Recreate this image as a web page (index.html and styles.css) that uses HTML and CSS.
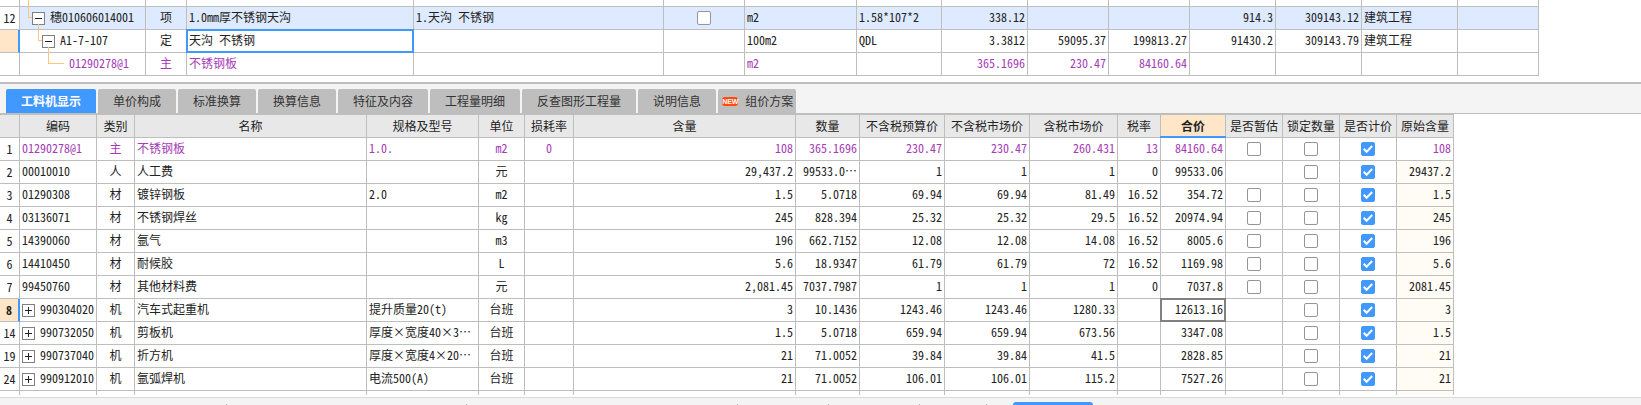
FILE: index.html
```html
<!DOCTYPE html>
<html lang="zh-CN">
<head>
    <meta charset="UTF-8">
    <meta name="viewport" content="width=device-width, initial-scale=1.0">
    <title>工料机显示</title>
    <link rel="stylesheet" href="styles.css">
</head>
<body>

    <!-- Bill of quantities -->
    <section class="bill">
        <table class="grid bill-grid">
            <colgroup>
                <col class="w20"><col class="w126"><col class="w41"><col class="w227"><col class="w250"><col class="w81"><col class="w112"><col class="w85"><col class="w86"><col class="w81"><col class="w81"><col class="w86"><col class="w86"><col class="w96"><col class="w81"><col>
            </colgroup>
            <tbody>
                <tr class="partial-top">
                    <td></td><td></td><td></td><td></td><td></td><td></td><td></td><td></td><td></td><td></td><td></td><td></td><td></td><td></td><td></td><td class="filler"></td>
                </tr>
                <tr class="current">
                    <td class="row-no">12</td>
                    <td><div class="tree level-1"><span class="branch first"></span><button class="toggle minus" type="button" aria-label="折叠"></button><span class="code">穗010606014001</span></div></td>
                    <td class="center">项</td>
                    <td>1.0mm厚不锈钢天沟</td>
                    <td>1.天沟 不锈钢</td>
                    <td class="center"><input type="checkbox" aria-label="主要清单"></td>
                    <td>m2</td>
                    <td>1.58*107*2</td>
                    <td class="num">338.12</td>
                    <td></td>
                    <td></td>
                    <td class="num">914.3</td>
                    <td class="num">309143.12</td>
                    <td>建筑工程</td>
                    <td></td>
                    <td class="filler"></td>
                </tr>
                <tr>
                    <td class="row-no active"></td>
                    <td><div class="tree level-2"><span class="branch"></span><button class="toggle minus" type="button" aria-label="折叠"></button><span class="code">A1-7-107</span></div></td>
                    <td class="center">定</td>
                    <td class="editing">天沟 不锈钢</td>
                    <td></td>
                    <td></td>
                    <td>100m2</td>
                    <td>QDL</td>
                    <td class="num">3.3812</td>
                    <td class="num">59095.37</td>
                    <td class="num">199813.27</td>
                    <td class="num">91430.2</td>
                    <td class="num">309143.79</td>
                    <td>建筑工程</td>
                    <td></td>
                    <td class="filler"></td>
                </tr>
                <tr class="main-material">
                    <td class="row-no"></td>
                    <td><div class="tree level-3"><span class="branch leaf"></span><span class="code">01290278@1</span></div></td>
                    <td class="center">主</td>
                    <td>不锈钢板</td>
                    <td></td>
                    <td></td>
                    <td>m2</td>
                    <td></td>
                    <td class="num">365.1696</td>
                    <td class="num">230.47</td>
                    <td class="num">84160.64</td>
                    <td></td>
                    <td></td>
                    <td></td>
                    <td></td>
                    <td class="filler"></td>
                </tr>
            </tbody>
        </table>
    </section>

    <!-- Detail tabs -->
    <nav class="tabs">
        <button class="tab selected" type="button">工料机显示</button>
        <button class="tab" type="button">单价构成</button>
        <button class="tab" type="button">标准换算</button>
        <button class="tab" type="button">换算信息</button>
        <button class="tab" type="button">特征及内容</button>
        <button class="tab" type="button">工程量明细</button>
        <button class="tab" type="button">反查图形工程量</button>
        <button class="tab" type="button">说明信息</button>
        <button class="tab has-badge" type="button"><span class="badge">NEW</span>组价方案</button>
    </nav>

    <!-- Labour, material and machine details -->
    <section class="detail">
        <table class="grid detail-grid">
            <colgroup>
                <col class="w20"><col class="w77"><col class="w38"><col class="w232"><col class="w112"><col class="w46"><col class="w49"><col class="w222"><col class="w64"><col class="w85"><col class="w85"><col class="w88"><col class="w43"><col class="w65"><col class="w57"><col class="w57"><col class="w57"><col class="w57"><col>
            </colgroup>
            <thead>
                <tr>
                    <th></th><th>编码</th><th>类别</th><th>名称</th><th>规格及型号</th><th>单位</th><th>损耗率</th><th>含量</th><th>数量</th><th>不含税预算价</th><th>不含税市场价</th><th>含税市场价</th><th>税率</th><th class="sorted">合价</th><th>是否暂估</th><th>锁定数量</th><th>是否计价</th><th>原始含量</th><th class="filler"></th>
                </tr>
            </thead>
            <tbody>
                <tr class="main-material">
                    <td class="row-no">1</td><td>01290278@1</td><td class="center">主</td><td>不锈钢板</td><td>1.0.</td><td class="center">m2</td><td class="center">0</td>
                    <td class="num">108</td><td class="num">365.1696</td><td class="num">230.47</td><td class="num">230.47</td><td class="num">260.431</td><td class="num">13</td><td class="num">84160.64</td>
                    <td class="center"><input type="checkbox" aria-label="是否暂估"></td><td class="center"><input type="checkbox" aria-label="锁定数量"></td><td class="center"><input type="checkbox" aria-label="是否计价" checked></td>
                    <td class="num">108</td><td class="filler"></td>
                </tr>
                <tr>
                    <td class="row-no">2</td><td>00010010</td><td class="center">人</td><td>人工费</td><td></td><td class="center">元</td><td></td>
                    <td class="num">29,437.2</td><td class="num">99533.0…</td><td class="num">1</td><td class="num">1</td><td class="num">1</td><td class="num">0</td><td class="num">99533.06</td>
                    <td></td><td class="center"><input type="checkbox" aria-label="锁定数量"></td><td class="center"><input type="checkbox" aria-label="是否计价" checked></td>
                    <td class="num original">29437.2</td><td class="filler"></td>
                </tr>
                <tr>
                    <td class="row-no">3</td><td>01290308</td><td class="center">材</td><td>镀锌钢板</td><td>2.0</td><td class="center">m2</td><td></td>
                    <td class="num">1.5</td><td class="num">5.0718</td><td class="num">69.94</td><td class="num">69.94</td><td class="num">81.49</td><td class="num">16.52</td><td class="num">354.72</td>
                    <td class="center"><input type="checkbox" aria-label="是否暂估"></td><td class="center"><input type="checkbox" aria-label="锁定数量"></td><td class="center"><input type="checkbox" aria-label="是否计价" checked></td>
                    <td class="num original">1.5</td><td class="filler"></td>
                </tr>
                <tr>
                    <td class="row-no">4</td><td>03136071</td><td class="center">材</td><td>不锈钢焊丝</td><td></td><td class="center">kg</td><td></td>
                    <td class="num">245</td><td class="num">828.394</td><td class="num">25.32</td><td class="num">25.32</td><td class="num">29.5</td><td class="num">16.52</td><td class="num">20974.94</td>
                    <td class="center"><input type="checkbox" aria-label="是否暂估"></td><td class="center"><input type="checkbox" aria-label="锁定数量"></td><td class="center"><input type="checkbox" aria-label="是否计价" checked></td>
                    <td class="num original">245</td><td class="filler"></td>
                </tr>
                <tr>
                    <td class="row-no">5</td><td>14390060</td><td class="center">材</td><td>氩气</td><td></td><td class="center">m3</td><td></td>
                    <td class="num">196</td><td class="num">662.7152</td><td class="num">12.08</td><td class="num">12.08</td><td class="num">14.08</td><td class="num">16.52</td><td class="num">8005.6</td>
                    <td class="center"><input type="checkbox" aria-label="是否暂估"></td><td class="center"><input type="checkbox" aria-label="锁定数量"></td><td class="center"><input type="checkbox" aria-label="是否计价" checked></td>
                    <td class="num original">196</td><td class="filler"></td>
                </tr>
                <tr>
                    <td class="row-no">6</td><td>14410450</td><td class="center">材</td><td>耐候胶</td><td></td><td class="center">L</td><td></td>
                    <td class="num">5.6</td><td class="num">18.9347</td><td class="num">61.79</td><td class="num">61.79</td><td class="num">72</td><td class="num">16.52</td><td class="num">1169.98</td>
                    <td class="center"><input type="checkbox" aria-label="是否暂估"></td><td class="center"><input type="checkbox" aria-label="锁定数量"></td><td class="center"><input type="checkbox" aria-label="是否计价" checked></td>
                    <td class="num original">5.6</td><td class="filler"></td>
                </tr>
                <tr>
                    <td class="row-no">7</td><td>99450760</td><td class="center">材</td><td>其他材料费</td><td></td><td class="center">元</td><td></td>
                    <td class="num">2,081.45</td><td class="num">7037.7987</td><td class="num">1</td><td class="num">1</td><td class="num">1</td><td class="num">0</td><td class="num">7037.8</td>
                    <td class="center"><input type="checkbox" aria-label="是否暂估"></td><td class="center"><input type="checkbox" aria-label="锁定数量"></td><td class="center"><input type="checkbox" aria-label="是否计价" checked></td>
                    <td class="num original">2081.45</td><td class="filler"></td>
                </tr>
                <tr>
                    <td class="row-no active">8</td><td><div class="tree"><button class="toggle" type="button" aria-label="展开"></button><span class="code">990304020</span></div></td><td class="center">机</td><td>汽车式起重机</td><td>提升质量20(t)</td><td class="center">台班</td><td></td>
                    <td class="num">3</td><td class="num">10.1436</td><td class="num">1243.46</td><td class="num">1243.46</td><td class="num">1280.33</td><td></td><td class="num focused">12613.16</td>
                    <td></td><td class="center"><input type="checkbox" aria-label="锁定数量"></td><td class="center"><input type="checkbox" aria-label="是否计价" checked></td>
                    <td class="num original">3</td><td class="filler"></td>
                </tr>
                <tr>
                    <td class="row-no">14</td><td><div class="tree"><button class="toggle" type="button" aria-label="展开"></button><span class="code">990732050</span></div></td><td class="center">机</td><td>剪板机</td><td>厚度×宽度40×3…</td><td class="center">台班</td><td></td>
                    <td class="num">1.5</td><td class="num">5.0718</td><td class="num">659.94</td><td class="num">659.94</td><td class="num">673.56</td><td></td><td class="num">3347.08</td>
                    <td></td><td class="center"><input type="checkbox" aria-label="锁定数量"></td><td class="center"><input type="checkbox" aria-label="是否计价" checked></td>
                    <td class="num original">1.5</td><td class="filler"></td>
                </tr>
                <tr>
                    <td class="row-no">19</td><td><div class="tree"><button class="toggle" type="button" aria-label="展开"></button><span class="code">990737040</span></div></td><td class="center">机</td><td>折方机</td><td>厚度×宽度4×20…</td><td class="center">台班</td><td></td>
                    <td class="num">21</td><td class="num">71.0052</td><td class="num">39.84</td><td class="num">39.84</td><td class="num">41.5</td><td></td><td class="num">2828.85</td>
                    <td></td><td class="center"><input type="checkbox" aria-label="锁定数量"></td><td class="center"><input type="checkbox" aria-label="是否计价" checked></td>
                    <td class="num original">21</td><td class="filler"></td>
                </tr>
                <tr>
                    <td class="row-no">24</td><td><div class="tree"><button class="toggle" type="button" aria-label="展开"></button><span class="code">990912010</span></div></td><td class="center">机</td><td>氩弧焊机</td><td>电流500(A)</td><td class="center">台班</td><td></td>
                    <td class="num">21</td><td class="num">71.0052</td><td class="num">106.01</td><td class="num">106.01</td><td class="num">115.2</td><td></td><td class="num">7527.26</td>
                    <td></td><td class="center"><input type="checkbox" aria-label="锁定数量"></td><td class="center"><input type="checkbox" aria-label="是否计价" checked></td>
                    <td class="num original">21</td><td class="filler"></td>
                </tr>
                <tr class="partial-bottom">
                    <td></td><td></td><td></td><td></td><td></td><td></td><td></td><td></td><td></td><td></td><td></td><td></td><td></td><td></td><td></td><td></td><td></td><td class="original"></td><td class="filler"></td>
                </tr>
            </tbody>
        </table>
    </section>

    <!-- Status bar -->
    <footer class="status">
        <span class="segment s227"></span>
        <span class="segment s240"></span>
        <span class="segment s271"></span>
        <span class="segment s91"></span>
        <span class="segment s91"></span>
        <span class="segment s67"></span>
        <span class="status-action"></span>
    </footer>

</body>
</html>
```

FILE: styles.css
```css
/* General Page Styles */
* {
    box-sizing: border-box;
}

body {
    display: flex;
    flex-direction: column;
    height: 100vh;
    margin: 0;
    overflow: hidden;
    background: #fff;
    color: #222;
    font-family: "Noto Sans Mono CJK SC", "Noto Sans CJK SC", monospace;
    font-size: 12px;
    line-height: 16px;
}

button {
    margin: 0;
    padding: 0;
    border: none;
    font: inherit;
    color: inherit;
}

/* Grids */
.grid {
    width: 100%;
    table-layout: fixed;
    border-collapse: separate;
    border-spacing: 0;
}

.grid td,
.grid th {
    position: relative;
    height: 23px;
    padding: 0 2px;
    border-right: 1px solid #bebebe;
    border-bottom: 1px solid #bebebe;
    white-space: nowrap;
    vertical-align: middle;
}

.grid td {
    padding-bottom: 2px;
}

.grid th {
    height: 24px;
    border-top: 1px solid #bebebe;
    background: #e8e8e8;
    font-weight: normal;
    text-align: center;
}

.grid .filler {
    border: none;
    background: none;
}

.grid .center {
    text-align: center;
}

.grid .num {
    text-align: right;
}

.grid .row-no {
    padding: 0;
    text-align: center;
}

.grid .row-no.active {
    border-right: 2px solid #4198ff;
    background: #ffe6c8;
    font-weight: bold;
}

.current td:not(.row-no):not(.filler) {
    background: #deeaff;
}

.main-material {
    color: #a53bb5;
}

.main-material .row-no {
    color: #222;
}

.grid .original {
    background: #fffcf6;
}

.grid .partial-top td {
    height: 7px;
}

.grid .partial-bottom td {
    height: 4px;
    border-bottom: none;
}

/* Cell frames lie over the grid lines */
.editing::after,
.focused::after,
.sorted::after {
    content: "";
    position: absolute;
    inset: -1px;
    border: 2px solid #4198ff;
}

.grid .focused::after {
    border-color: #808080;
}

.grid .sorted {
    background: #ffe6c8;
    font-weight: bold;
}

.grid .sorted::after {
    border-width: 0 0 2px;
}

/* Column widths */
.w20 { width: 20px; }
.w38 { width: 38px; }
.w41 { width: 41px; }
.w43 { width: 43px; }
.w46 { width: 46px; }
.w49 { width: 49px; }
.w57 { width: 57px; }
.w64 { width: 64px; }
.w65 { width: 65px; }
.w77 { width: 77px; }
.w81 { width: 81px; }
.w85 { width: 85px; }
.w86 { width: 86px; }
.w88 { width: 88px; }
.w96 { width: 96px; }
.w112 { width: 112px; }
.w126 { width: 126px; }
.w222 { width: 222px; }
.w227 { width: 227px; }
.w232 { width: 232px; }
.w250 { width: 250px; }

/* Tree */
.tree {
    display: flex;
    align-items: center;
    height: 22px;
    margin-bottom: -2px;
}

.level-1 {
    padding-left: 6px;
}

.level-2 {
    padding-left: 16px;
}

.level-3 {
    padding-left: 26px;
}

.code {
    padding-bottom: 2px;
}

.branch {
    align-self: flex-start;
    width: 4px;
    height: 17px;
    margin-top: -6px;
    border-left: 1px solid #ffc579;
    border-bottom: 1px solid #ffc579;
}

.branch.first {
    height: 18px;
    margin-top: -7px;
}

.branch.leaf {
    width: 16px;
    margin-right: 5px;
}

.toggle {
    width: 13px;
    height: 13px;
    margin-right: 5px;
    border: 1px solid #808080;
    background:
        linear-gradient(#222, #222) center / 7px 1px no-repeat,
        linear-gradient(#222, #222) center / 1px 7px no-repeat,
        #fff;
}

.toggle.minus {
    background: linear-gradient(#222, #222) center / 7px 1px no-repeat, #fff;
}

/* Checkboxes */
input[type="checkbox"] {
    display: block;
    appearance: none;
    width: 14px;
    height: 14px;
    margin: 2px auto 0;
    border: 1px solid #959595;
    border-radius: 2px;
    background: #fff;
}

input[type="checkbox"]:checked {
    border-color: #4198ff;
    background: #4198ff url("data:image/svg+xml,%3Csvg xmlns='http://www.w3.org/2000/svg' viewBox='0 0 12 12'%3E%3Cpath d='M1.7 5.8 4.6 8.8 10.2 3' fill='none' stroke='%23fff' stroke-width='2'/%3E%3C/svg%3E") center / 12px 12px no-repeat;
}

/* Detail Tabs */
.tabs {
    display: flex;
    gap: 2px;
    margin-top: 6px;
    padding: 5px 6px 0;
    border-top: 2px solid #bebebe;
    border-bottom: 1px solid #bebebe;
    background: #f4f4f4;
    font-family: "Noto Sans CJK SC", sans-serif;
}

.tab {
    height: 24px;
    padding: 0 15px;
    border-radius: 2px 2px 0 0;
    background: #bebebe;
    color: #333;
    white-space: nowrap;
}

.tab.selected {
    background: #4198ff;
    color: #fff;
    font-weight: bold;
}

.tab.has-badge {
    display: flex;
    align-items: center;
    gap: 7px;
    padding: 0 3px 0 4px;
}

.badge {
    width: 16px;
    height: 9px;
    border-radius: 3px;
    background: #ff4a0c;
    color: #fff;
    font: bold 7px/9px "Liberation Sans Narrow", "Liberation Sans", sans-serif;
    text-align: center;
}

.detail {
    flex: 1;
    min-height: 0;
    overflow: hidden;
}

/* Status Bar */
.status {
    display: flex;
    height: 8px;
    border-top: 1px solid #d9d9d9;
    background: #f4f4f4;
}

.segment {
    margin-top: 6px;
    border-right: 1px solid #aaa;
}

.s67 { width: 67px; }
.s91 { width: 91px; }
.s227 { width: 227px; }
.s240 { width: 240px; }
.s271 { width: 271px; }

.status-action {
    width: 80px;
    margin: 4px 0 0 26px;
    border-radius: 3px 3px 0 0;
    background: #4198ff;
}
```
